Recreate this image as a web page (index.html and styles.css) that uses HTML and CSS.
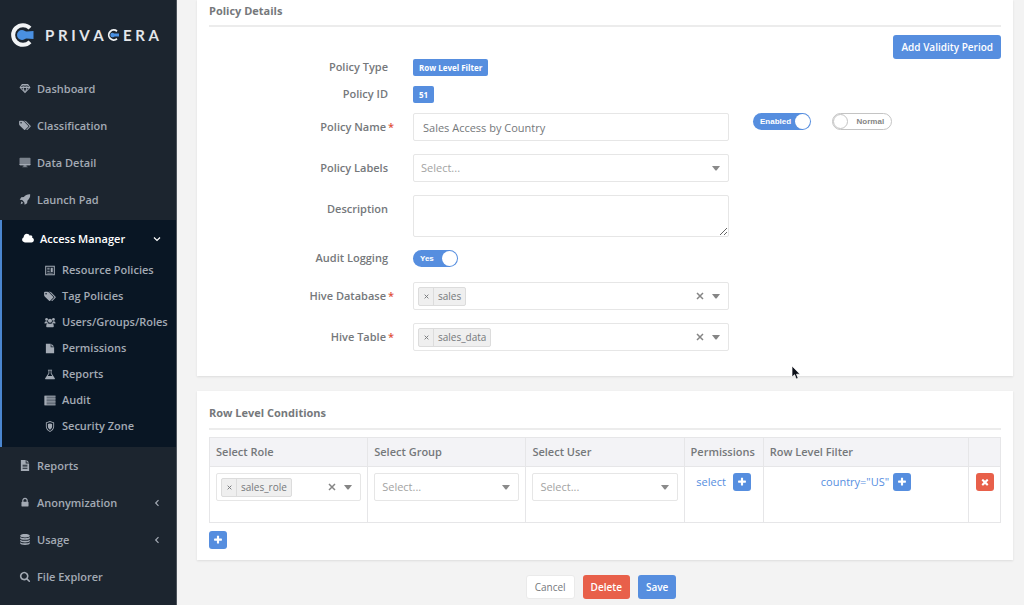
FILE: index.html
```html
<!DOCTYPE html>
<html lang="en">
<head>
<meta charset="utf-8">
<title>Privacera – Policy Details</title>
<link rel="stylesheet" href="styles.css">
</head>
<body>
<svg class="sprite" aria-hidden="true">
  <symbol id="i-gem" viewBox="0 0 16 16"><path fill-rule="evenodd" d="M3.600 1.500h8.800L16 6.500 8 15 0 6.500zM4.300 3 2.300 5.800h2.200zM5.800 3 5.700 5.800 7.500 3zM8.500 3 10.300 5.800l-.1-2.800zM11.700 3 11.500 5.800H13.700zM8 3.900 6.600 5.900h2.800zM2.600 7.400 5.800 10.900 4.500 7.400zM6 7.400 8 12.700l2-5.300zM11.500 7.400 10.200 10.900l3.200-3.500z"/></symbol>
  <symbol id="i-tags" viewBox="0 0 1920 1792"><path d="M448 448q0-53-37.500-90.500t-90.500-37.500-90.500 37.500-37.500 90.500 37.500 90.500 90.500 37.500 90.500-37.500 37.500-90.500zm1067 576q0 53-37 90l-491 492q-39 37-91 37-53 0-90-37l-715-716q-38-37-64.500-101t-26.500-117v-416q0-52 38-90t90-38h416q53 0 117 26.500t102 64.500l715 714q37 39 37 91zm384 0q0 53-37 90l-491 492q-39 37-91 37-36 0-59-14t-53-45l470-470q37-37 37-90 0-52-37-91l-715-714q-38-38-102-64.500t-117-26.500h224q53 0 117 26.500t102 64.500l715 714q37 39 37 91z"/></symbol>
  <symbol id="i-desktop" viewBox="0 0 16 16"><path d="M1 1h14a1 1 0 0 1 1 1v9a1 1 0 0 1-1 1h-5l.6 2H12v1H4v-1h1.400L6 12H1a1 1 0 0 1-1-1V2a1 1 0 0 1 1-1z" opacity=".7"/><path d="M0 10h16v1a1 1 0 0 1-1 1H1a1 1 0 0 1-1-1z" /></symbol>
  <symbol id="i-rocket" viewBox="0 0 16 16"><path d="M15.500.5c.3 4-1 6.700-4 9.300l-.4 3.700-3.600 2.200-.6-3.800-3-3L.3 8.300l2.300-3.600 3.700-.3C8.800 1.600 11.500.2 15.500.5zM2.800 10.500l2.700 2.700-3.800 1.600z"/></symbol>
  <symbol id="i-cloud" viewBox="0 0 1920 1792"><path d="M1920 1152q0 159-112.500 271.500t-271.500 112.500h-1088q-185 0-316.500-131.500t-131.500-316.500q0-132 71-241.500t187-163.500q-2-28-2-43 0-212 150-362t362-150q158 0 286.500 88t187.500 230q70-62 166-62 106 0 181 75t75 181q0 75-41 138 129 30 213 134.500t84 239.500z"/></symbol>
  <symbol id="i-news" viewBox="0 0 16 16"><path fill-rule="evenodd" d="M1 1h14v14H1zM2.500 2.500v11h11v-11zM4 4h3.500v1.300H4zM4 6.500h3.500v1.300H4zM4 9h3.500v1.300H4zM4 11.300h8v1.200H4zM9 4h3v6H9z"/></symbol>
  <symbol id="i-users" viewBox="0 0 16 16"><circle cx="3" cy="3.500" r="2"/><circle cx="13" cy="3.500" r="2"/><circle cx="8" cy="5.500" r="3"/><path d="M0 9.500C0 7 1 6 2.500 6 4 6 4 6.500 4.500 7 4.500 8 4.800 8.600 5 9zM16 9.500C16 7 15 6 13.500 6 12 6 12 6.500 11.500 7c0 1-.3 1.600-.5 2zM2.500 13.500C2.500 10.500 3.500 9 5 9c2 1.300 4 1.300 6 0 1.500 0 2.500 1.500 2.500 4.500 0 1-.7 1.500-1.500 1.500H4c-.8 0-1.500-.5-1.500-1.500z"/></symbol>
  <symbol id="i-file" viewBox="0 0 16 16"><path d="M2 1h7v5h5v9H2zM10 1l4 4h-4z"/></symbol>
  <symbol id="i-flask" viewBox="0 0 16 16"><path fill-rule="evenodd" d="M5 1h6v1.300h-.8v4L15 13.500c.4.900 0 1.500-1 1.500H2c-1 0-1.400-.6-1-1.500l4.800-7.200v-4H5zM7 2.300v4.400L4.700 10h6.600L9 6.700V2.300z"/></symbol>
  <symbol id="i-list" viewBox="0 0 16 16"><path d="M0 1h16v14H0z" opacity=".6"/><path d="M0 1h16v1.200H0zM0 5h16v1.200H0zM0 9.400h16v1.200H0zM0 13.800h16V15H0zM0 1h3v14H0z"/></symbol>
  <symbol id="i-shield" viewBox="0 0 16 16"><path fill-rule="evenodd" d="M8 0l6 2v6c0 4-3 6.500-6 8-3-1.500-6-4-6-8V2zM8 1.500 3.300 3v5c0 3 2 5 4.700 6.500C10.700 13 12.700 11 12.700 8V3z"/><path d="M8 3.500l3 1V8c0 2-1.200 3.500-3 4.600C6.200 11.500 5 10 5 8V4.500z"/></symbol>
  <symbol id="i-filetext" viewBox="0 0 16 16"><path fill-rule="evenodd" d="M2 0h7v5h5v11H2zM4.500 7v1.200h7V7zM4.500 9.500v1.200h7V9.500zM4.500 12v1.200h7V12zM10.200 0 14 3.800h-3.800z"/></symbol>
  <symbol id="i-lock" viewBox="0 0 1792 1792"><path d="M640 768h512v-192q0-106-75-181t-181-75-181 75-75 181v192zm832 96v576q0 40-28 68t-68 28h-960q-40 0-68-28t-28-68v-576q0-40 28-68t68-28h32v-192q0-184 132-316t316-132 316 132 132 316v192h32q40 0 68 28t28 68z"/></symbol>
  <symbol id="i-db" viewBox="0 0 16 16"><path d="M1 2.500C1 1 4 0 8 0s7 1 7 2.500S12 5 8 5 1 4 1 2.500zM1 4.500C2.500 5.800 5 6.200 8 6.200s5.500-.4 7-1.700V6c0 1.500-3 2.500-7 2.500S1 7.500 1 6zM1 8.200c1.500 1.300 4 1.700 7 1.700s5.500-.4 7-1.700v1.500c0 1.500-3 2.500-7 2.500s-7-1-7-2.500zM1 11.900c1.500 1.300 4 1.700 7 1.700s5.500-.4 7-1.700v1.600C15 15 12 16 8 16s-7-1-7-2.500z"/></symbol>
  <symbol id="i-search" viewBox="0 0 1792 1792"><path d="M1216 832q0-185-131.500-316.500t-316.500-131.500-316.500 131.500-131.500 316.500 131.500 316.500 316.500 131.500 316.500-131.500 131.500-316.500zm512 832q0 52-38 90t-90 38q-54 0-90-38l-343-342q-179 124-399 124-143 0-273.500-55.500t-225-150-150-225-55.500-273.500 55.500-273.500 150-225 225-150 273.500-55.500 273.500 55.500 225 150 150 225 55.500 273.500q0 220-124 399l343 343q37 37 37 90z"/></symbol>
  <symbol id="i-times" viewBox="0 0 1792 1792"><path d="M1490 1322q0 40-28 68l-136 136q-28 28-68 28t-68-28l-294-294-294 294q-28 28-68 28t-68-28l-136-136q-28-28-28-68t28-68l294-294-294-294q-28-28-28-68t28-68l136-136q28-28 68-28t68 28l294 294 294-294q28-28 68-28t68 28l136 136q28 28 28 68t-28 68l-294 294 294 294q28 28 28 68z"/></symbol>
  <symbol id="i-plus" viewBox="0 0 1792 1792"><path d="M1600 736v192q0 40-28 68t-68 28h-416v416q0 40-28 68t-68 28h-192q-40 0-68-28t-28-68v-416h-416q-40 0-68-28t-28-68v-192q0-40 28-68t68-28h416v-416q0-40 28-68t68-28h192q40 0 68 28t28 68v416h416q40 0 68 28t28 68z"/></symbol>
  <symbol id="i-caret" viewBox="0 0 8 5"><path d="M0 0h8L4.500 4.500h-1z"/></symbol>
  <symbol id="i-x" viewBox="0 0 8 8"><path d="M1 1l6 6M7 1L1 7" fill="none" stroke="currentColor" stroke-width="1.500"/></symbol>
  <symbol id="i-down" viewBox="0 0 8 8"><path d="M1 2.500l3 3 3-3" fill="none" stroke="currentColor" stroke-width="1.200"/></symbol>
  <symbol id="i-left" viewBox="0 0 8 8"><path d="M5.500 1.200L2.700 4l2.800 2.800" fill="none" stroke="currentColor" stroke-width="1.200"/></symbol>
</svg>

<aside class="sidebar">
  <a class="brand" href="#" aria-label="Privacera">
    <svg class="brand-mark" viewBox="0 0 24 24" aria-hidden="true"><path d="M20 5.200A9.800 9.800 0 1 0 20 18.800" fill="none" stroke="#f1f3f5" stroke-width="4"/><path d="M12 7c2.200 0 3 1.600 4.500 1.600L23.500 8v8l-7-.6c-1.500 0-2.300 1.600-4.500 1.600a5 5 0 0 1 0-10z" fill="#4a90e2"/></svg>
    <span class="brand-name">
      <span>P</span><span>R</span><span>I</span><span>V</span><span>A</span>
      <svg class="brand-c" viewBox="0 0 12 12" aria-hidden="true"><path d="M10 2.200A5 5 0 1 0 10 9.800" fill="none" stroke="#f1f3f5" stroke-width="1.800"/><path d="M5.500 3.800c1.100 0 1.500.8 2.200.8H12v2.800H7.700c-.7 0-1.100.8-2.200.8a2.200 2.200 0 0 1 0-4.400z" fill="#4a90e2"/></svg>
      <span>E</span><span>R</span><span>A</span>
    </span>
  </a>
  <nav>
    <a class="nav-item" href="#"><svg class="icon"><use href="#i-gem"/></svg>Dashboard</a>
    <a class="nav-item" href="#"><svg class="icon"><use href="#i-tags"/></svg>Classification</a>
    <a class="nav-item" href="#"><svg class="icon"><use href="#i-desktop"/></svg>Data Detail</a>
    <a class="nav-item" href="#"><svg class="icon"><use href="#i-rocket"/></svg>Launch Pad</a>
    <div class="nav-group">
      <a class="nav-item nav-parent" href="#"><svg class="icon"><use href="#i-cloud"/></svg>Access Manager<svg class="chevron"><use href="#i-down"/></svg></a>
      <a class="nav-sub" href="#"><svg class="icon"><use href="#i-news"/></svg>Resource Policies</a>
      <a class="nav-sub" href="#"><svg class="icon"><use href="#i-tags"/></svg>Tag Policies</a>
      <a class="nav-sub" href="#"><svg class="icon"><use href="#i-users"/></svg>Users/Groups/Roles</a>
      <a class="nav-sub" href="#"><svg class="icon"><use href="#i-file"/></svg>Permissions</a>
      <a class="nav-sub" href="#"><svg class="icon"><use href="#i-flask"/></svg>Reports</a>
      <a class="nav-sub" href="#"><svg class="icon"><use href="#i-list"/></svg>Audit</a>
      <a class="nav-sub" href="#"><svg class="icon"><use href="#i-shield"/></svg>Security Zone</a>
    </div>
    <a class="nav-item" href="#"><svg class="icon"><use href="#i-filetext"/></svg>Reports</a>
    <a class="nav-item" href="#"><svg class="icon"><use href="#i-lock"/></svg>Anonymization<svg class="chevron"><use href="#i-left"/></svg></a>
    <a class="nav-item" href="#"><svg class="icon"><use href="#i-db"/></svg>Usage<svg class="chevron"><use href="#i-left"/></svg></a>
    <a class="nav-item" href="#"><svg class="icon"><use href="#i-search"/></svg>File Explorer</a>
  </nav>
</aside>

<main class="content">
  <section class="card card-details">
    <h2 class="card-title">Policy Details</h2>
    <div class="toolbar"><button class="btn btn-primary" type="button">Add Validity Period</button></div>
    <form class="form">
      <div class="row row-badge">
        <span class="label">Policy Type</span>
        <div><span class="badge">Row Level Filter</span></div>
      </div>
      <div class="row row-badge">
        <span class="label">Policy ID</span>
        <div><span class="badge">51</span></div>
      </div>
      <div class="row">
        <label class="label required" for="name">Policy Name</label>
        <input class="box text" id="name" type="text" value="Sales Access by Country">
        <div class="switches">
          <label class="switch on"><span>Enabled</span><input type="checkbox" checked></label>
          <label class="switch off"><input type="checkbox"><span>Normal</span></label>
        </div>
      </div>
      <div class="row">
        <label class="label" for="labels">Policy Labels</label>
        <div class="picker"><select class="box" id="labels"><option>Select...</option></select><svg class="caret"><use href="#i-caret"/></svg></div>
      </div>
      <div class="row">
        <label class="label" for="desc">Description</label>
        <textarea class="box area" id="desc"></textarea>
      </div>
      <div class="row row-switch">
        <label class="label" for="audit">Audit Logging</label>
        <div class="switch-cell"><label class="switch on"><span>Yes</span><input id="audit" type="checkbox" checked></label></div>
      </div>
      <div class="row">
        <span class="label required">Hive Database</span>
        <div class="box multi"><span class="tag"><button type="button" aria-label="Remove sales"><svg><use href="#i-x"/></svg></button><span>sales</span></span>
          <button class="clear" type="button" aria-label="Clear"><svg><use href="#i-x"/></svg></button><button class="open" type="button" aria-label="Open"><svg><use href="#i-caret"/></svg></button></div>
      </div>
      <div class="row">
        <span class="label required">Hive Table</span>
        <div class="box multi"><span class="tag"><button type="button" aria-label="Remove sales_data"><svg><use href="#i-x"/></svg></button><span>sales_data</span></span>
          <button class="clear" type="button" aria-label="Clear"><svg><use href="#i-x"/></svg></button><button class="open" type="button" aria-label="Open"><svg><use href="#i-caret"/></svg></button></div>
      </div>
    </form>
  </section>

  <section class="card card-conditions">
    <h2 class="card-title">Row Level Conditions</h2>
    <table class="grid">
      <colgroup><col class="c-pick"><col class="c-pick"><col class="c-pick"><col class="c-perm"><col class="c-filter"><col></colgroup>
      <thead>
        <tr><th>Select Role</th><th>Select Group</th><th>Select User</th><th>Permissions</th><th>Row Level Filter</th><th></th></tr>
      </thead>
      <tbody>
        <tr>
          <td><div class="box multi"><span class="tag"><button type="button" aria-label="Remove sales_role"><svg><use href="#i-x"/></svg></button><span>sales_role</span></span>
            <button class="clear" type="button" aria-label="Clear"><svg><use href="#i-x"/></svg></button><button class="open" type="button" aria-label="Open"><svg><use href="#i-caret"/></svg></button></div></td>
          <td><div class="picker"><select class="box" aria-label="Select Group"><option>Select...</option></select><svg class="caret"><use href="#i-caret"/></svg></div></td>
          <td><div class="picker"><select class="box" aria-label="Select User"><option>Select...</option></select><svg class="caret"><use href="#i-caret"/></svg></div></td>
          <td><div class="cell"><a href="#">select</a><button class="square" type="button" aria-label="Add permission"><svg><use href="#i-plus"/></svg></button></div></td>
          <td><div class="cell cell-tight"><a href="#">country="US"</a><button class="square" type="button" aria-label="Add filter"><svg><use href="#i-plus"/></svg></button></div></td>
          <td><div class="cell"><button class="square danger" type="button" aria-label="Delete row"><svg><use href="#i-times"/></svg></button></div></td>
        </tr>
      </tbody>
    </table>
    <button class="square" type="button" aria-label="Add condition"><svg><use href="#i-plus"/></svg></button>
  </section>

  <div class="actions">
    <button class="btn btn-plain" type="button">Cancel</button>
    <button class="btn btn-danger" type="button">Delete</button>
    <button class="btn btn-primary" type="button">Save</button>
  </div>
</main>
<svg class="pointer" viewBox="0 0 10 15" aria-hidden="true"><path d="M1 1v11l2.600-2.300L5.200 14l2-.8-1.700-4H9z" fill="#0b0f18" stroke="#fff" stroke-width=".7"/></svg>
</body>
</html>
```

FILE: styles.css
```css
* { box-sizing: border-box; }

body {
  margin: 0;
  display: flex;
  min-height: 100vh;
  overflow: hidden;
  background: #f3f3f3;
  color: #75787b;
  font: 11px/16px "Open Sans", "Noto Sans", sans-serif;
}

a { color: inherit; text-decoration: none; }
button, input, select, textarea { font: inherit; color: inherit; margin: 0; }
button { padding: 0; border: 0; background: none; cursor: pointer; }
svg { fill: currentColor; flex: none; }
.sprite { display: none; }

/* Sidebar */
.sidebar {
  flex: 0 0 177px;
  background: #1c252f;
  color: #a3aab4;
  border-right: 1px solid #4d545c;
  font-weight: 600;
}
.brand {
  display: flex;
  align-items: center;
  gap: 11px;
  height: 70px;
  padding: 0 17px 0 10px;
}
.brand-mark { width: 24px; height: 24px; }
.brand-name {
  flex: 1;
  display: flex;
  align-items: center;
  justify-content: space-between;
  color: #e4e7ea;
  font: 700 15px/20px Lato, sans-serif;
}
.brand-c { width: 12px; height: 12px; }
.nav-item, .nav-sub { display: flex; align-items: center; }
.nav-item { height: 37px; padding: 0 15px 0 19px; gap: 6px; }
.nav-sub { height: 26px; padding-left: 42px; gap: 6px; }
.icon { width: 12px; height: 11px; }
.chevron { width: 8px; height: 8px; margin-left: auto; }
.nav-group {
  margin-top: 2px;
  padding-bottom: 8px;
  background: #091624;
  border-left: 2px solid #4a86d0;
}
.nav-parent { color: #fff; padding-left: 20px; }

/* Cards */
.content {
  flex: 1;
  min-width: 0;
  padding: 0 11px 0 20px;
  display: flex;
  flex-direction: column;
  gap: 15px;
}
.card {
  background: #fff;
  padding: 0 12px;
  box-shadow: 0 1px 2px #dcdcdc;
}
.card-title {
  margin: 0;
  font-size: 11px;
  line-height: 16px;
  font-weight: 700;
  border-bottom: 2px solid #ececec;
}
.card-details { padding-bottom: 25px; }
.card-details .card-title { padding: 3px 0 6px; }
.card-conditions { padding-bottom: 11px; }
.card-conditions .card-title { padding: 14px 0 7px; }
.toolbar { display: flex; justify-content: flex-end; padding-top: 8px; }

/* Buttons */
.btn {
  height: 24px;
  padding: 0 8px;
  border-radius: 3px;
  font-size: 10px;
  font-weight: 600;
  color: #fff;
}
.btn-primary { background: #568edf; }
.btn-danger { background: #e8604a; }
.btn-plain { background: #fff; color: #75787b; font-weight: 400; border: 1px solid #eaeaea; }
.square {
  display: flex;
  align-items: center;
  justify-content: center;
  width: 18px;
  height: 18px;
  border-radius: 3px;
  background: #568edf;
  color: #fff;
}
.square svg { width: 10px; height: 10px; }
.danger { background: #e8604a; }

/* Form */
.form { display: flex; flex-direction: column; gap: 13px; }
.row {
  display: grid;
  grid-template-columns: 188fr 316fr 256fr;
  column-gap: 16px;
  align-items: start;
}
.label {
  padding: 6px 9px 0 0;
  text-align: right;
  font-weight: 600;
}
.required { padding-right: 0; }
.required::after { content: "*"; display: inline-block; width: 9px; padding-left: 2px; color: #e0513c; text-align: left; }
.row-badge { margin-bottom: -3px; }
.row-badge .label, .row-switch .label { padding-top: 0; }
.row-switch { padding-bottom: 2px; }
.badge {
  display: inline-block;
  height: 17px;
  padding: 0 6px;
  border-radius: 2px;
  background: #568edf;
  color: #fff;
  font-size: 8px;
  line-height: 17px;
  font-weight: 700;
  vertical-align: top;
}
.box {
  display: block;
  width: 100%;
  height: 28px;
  background: #fff;
  border: 1px solid #e6e6e6;
  border-radius: 2px;
}
.text { padding: 0 9px; }
.area { height: 42px; resize: vertical; }
.picker { display: grid; align-items: center; }
.picker > * { grid-area: 1 / 1; }
.picker select { appearance: none; padding: 0 7px; color: #a3a3a3; }
.caret { width: 8px; height: 5px; justify-self: end; margin-right: 9px; color: #8a8a8a; pointer-events: none; }
.multi { display: flex; align-items: center; padding: 0 8px 0 4px; }
.tag {
  display: flex;
  height: 19px;
  margin-right: auto;
  border: 1px solid #dcdcdc;
  border-radius: 2px;
  background: #efefef;
  font-size: 10px;
  line-height: 17px;
}
.tag button { width: 15px; border-right: 1px solid #dcdcdc; display: flex; align-items: center; justify-content: center; }
.tag svg { width: 5px; height: 5px; }
.tag span { padding: 0 4px; }
.clear, .open { display: flex; color: #858585; }
.clear svg { width: 8px; height: 8px; }
.open { margin-left: 8px; }
.open svg { width: 8px; height: 5px; }

/* Switches */
.switches { display: flex; gap: 21px; padding-left: 8px; }
.switch {
  display: inline-flex;
  align-items: center;
  justify-content: space-between;
  height: 17px;
  border-radius: 9px;
  font: 700 8px/17px "Liberation Sans", Arial, sans-serif;
}
.switch input { appearance: none; width: 15px; height: 15px; border-radius: 50%; background: #fff; }
.switch.on { min-width: 45px; padding: 0 1px 0 7px; gap: 4px; background: #568edf; color: #fff; }
.switch.off { min-width: 60px; padding-right: 7px; border: 1px solid #c4c4c4; color: #858585; }
.switch.off input { border: 1px solid #c4c4c4; }
.switch-cell { display: flex; }

/* Conditions table */
.grid {
  width: 100%;
  margin: 7px 0 8px;
  table-layout: fixed;
  border-collapse: collapse;
}
.c-pick { width: 20%; }
.c-perm { width: 10%; }
.c-filter { width: 26%; }
.grid th, .grid td { border: 1px solid #e6e6e8; padding: 6px; }
.grid th { height: 28px; background: #f3f3f6; text-align: left; font-weight: 600; }
.grid td { height: 56px; vertical-align: top; }
.cell { display: flex; justify-content: center; gap: 7px; line-height: 18px; }
.cell-tight { gap: 4px; }
.cell a { color: #568edf; }

.actions { display: flex; justify-content: center; gap: 8px; padding-right: 8px; }

.pointer { position: absolute; left: 791px; top: 365px; width: 10px; height: 15px; }
```
